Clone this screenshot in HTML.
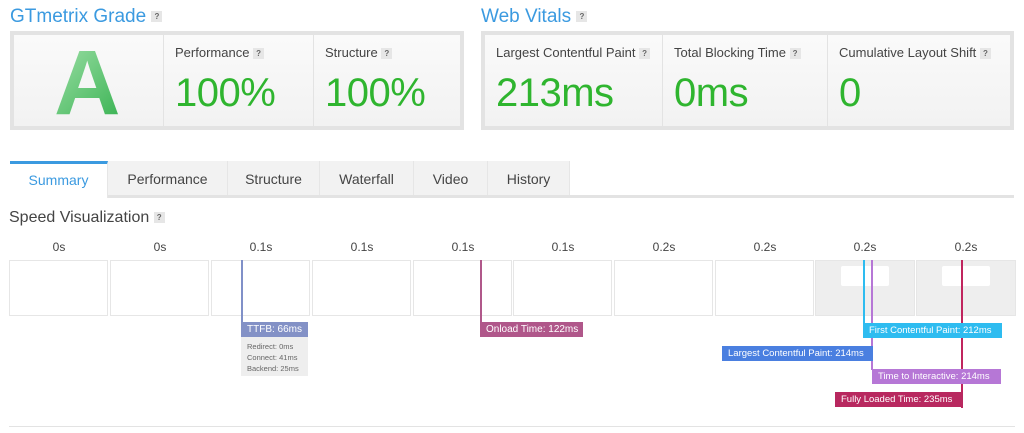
<!DOCTYPE html>
<html><head><style>
*{box-sizing:border-box;margin:0;padding:0}
body{width:1024px;height:433px;background:#fff;font-family:"Liberation Sans",sans-serif;position:relative;overflow:hidden;color:#444}
.a{position:absolute}
.h{color:#3b9ae0;font-size:19px}
.q{display:inline-block;width:11px;height:11px;background:#e6e6e6;color:#666;font-size:8px;text-align:center;line-height:11px;font-weight:bold;vertical-align:middle}
.box{border:4px solid #e3e3e3;background:#f8f8f8}
.cell{position:absolute;top:0;bottom:0;border-left:1px solid #e3e3e3;background:linear-gradient(#fafafa,#f2f2f2)}
.lbl{position:absolute;left:11px;top:10px;font-size:13px;color:#444}
.big{position:absolute;left:11px;top:36px;font-size:40px;color:#2fb52f;letter-spacing:-0.5px}
.tab{position:absolute;top:161px;height:34px;background:#f2f2f2;border-right:1px solid #e6e6e6;font-size:14px;color:#444;text-align:center;line-height:36px}
.fr{position:absolute;top:260px;height:56px;border:1px solid #e6e6e6;background:#fff}
.t{position:absolute;top:240px;width:100px;text-align:center;font-size:12px;color:#444}
.ln{position:absolute;width:2px}
.m{position:absolute;height:15px;color:#fff;font-size:10px;line-height:15px;padding-left:6px;white-space:nowrap;overflow:hidden}
</style></head><body>
<div class="a h" style="left:10px;top:6px">GTmetrix Grade <span class="q">?</span></div>
<div class="a h" style="left:481px;top:6px">Web Vitals <span class="q">?</span></div>
<div class="a box" style="left:10px;top:31px;width:454px;height:99px">
 <div class="cell" style="left:0;width:149px;border:none"><div style="position:absolute;left:40px;top:-4px;font-size:92px;font-weight:bold;background:linear-gradient(135deg,#a6e3ae,#2fae4a);-webkit-background-clip:text;color:transparent">A</div></div>
 <div class="cell" style="left:149px;width:150px"><div class="lbl">Performance <span class="q">?</span></div><div class="big">100%</div></div>
 <div class="cell" style="left:299px;width:147px"><div class="lbl">Structure <span class="q">?</span></div><div class="big">100%</div></div>
</div>
<div class="a box" style="left:481px;top:31px;width:533px;height:99px">
 <div class="cell" style="left:0;width:177px;border:none"><div class="lbl">Largest Contentful Paint <span class="q">?</span></div><div class="big">213ms</div></div>
 <div class="cell" style="left:177px;width:165px"><div class="lbl">Total Blocking Time <span class="q">?</span></div><div class="big">0ms</div></div>
 <div class="cell" style="left:342px;width:183px"><div class="lbl">Cumulative Layout Shift <span class="q">?</span></div><div class="big">0</div></div>
</div>
<div class="a" style="left:10px;top:195px;width:1004px;height:3px;background:#e3e3e3"></div>
<div class="tab" style="left:10px;width:98px;background:#fff;border-top:3px solid #3b9ae0;color:#3b9ae0;height:37px;line-height:33px">Summary</div>
<div class="tab" style="left:108px;width:120px">Performance</div>
<div class="tab" style="left:228px;width:92px">Structure</div>
<div class="tab" style="left:320px;width:94px">Waterfall</div>
<div class="tab" style="left:414px;width:74px">Video</div>
<div class="tab" style="left:488px;width:82px">History</div>
<div class="a" style="left:9px;top:209px;font-size:16px;color:#444">Speed Visualization <span class="q">?</span></div>
<div class="t" style="left:9px">0s</div><div class="t" style="left:110px">0s</div><div class="t" style="left:211px">0.1s</div><div class="t" style="left:312px">0.1s</div><div class="t" style="left:413px">0.1s</div><div class="t" style="left:513px">0.1s</div><div class="t" style="left:614px">0.2s</div><div class="t" style="left:715px">0.2s</div><div class="t" style="left:815px">0.2s</div><div class="t" style="left:916px">0.2s</div>
<div class="fr" style="left:9px;width:99px"></div><div class="fr" style="left:110px;width:99px"></div><div class="fr" style="left:211px;width:99px"></div><div class="fr" style="left:312px;width:99px"></div><div class="fr" style="left:413px;width:99px"></div><div class="fr" style="left:513px;width:99px"></div><div class="fr" style="left:614px;width:99px"></div><div class="fr" style="left:715px;width:99px"></div>
<div class="fr" style="left:815px;width:100px;background:#eee"><div style="position:absolute;left:25px;top:5px;width:48px;height:20px;background:#fff;border-radius:2px"></div></div>
<div class="fr" style="left:916px;width:100px;background:#eee"><div style="position:absolute;left:25px;top:5px;width:48px;height:20px;background:#fff;border-radius:2px"></div></div>
<div class="ln" style="left:241px;top:260px;height:63px;background:#8090c8"></div>
<div class="m" style="left:241px;top:322px;width:67px;background:#8391c6">TTFB: 66ms</div>
<div class="a" style="left:241px;top:337px;width:67px;height:39px;background:#eee;font-size:7.5px;color:#666;line-height:11px;padding:4px 6px">Redirect: 0ms<br>Connect: 41ms<br>Backend: 25ms</div>
<div class="ln" style="left:480px;top:260px;height:63px;background:#b0588a"></div>
<div class="m" style="left:480px;top:322px;width:103px;background:#b0578a">Onload Time: 122ms</div>
<div class="ln" style="left:863px;top:260px;height:64px;background:#2ebcf0"></div>
<div class="ln" style="left:871px;top:260px;height:110px;background:#b677d6"></div>
<div class="ln" style="left:961px;top:260px;height:148px;background:#c0255e"></div>
<div class="m" style="left:863px;top:323px;width:139px;background:#2ebcf0;font-size:9.5px">First Contentful Paint: 212ms</div>
<div class="m" style="left:722px;top:346px;width:151px;background:#4a7fe0;font-size:9.5px">Largest Contentful Paint: 214ms</div>
<div class="m" style="left:872px;top:369px;width:129px;background:#b677d6;font-size:9.5px">Time to Interactive: 214ms</div>
<div class="m" style="left:835px;top:392px;width:128px;background:#b8285f;font-size:9.5px">Fully Loaded Time: 235ms</div>
<div class="a" style="left:9px;top:426px;width:1006px;height:1px;background:#e3e3e3"></div>
</body></html>
